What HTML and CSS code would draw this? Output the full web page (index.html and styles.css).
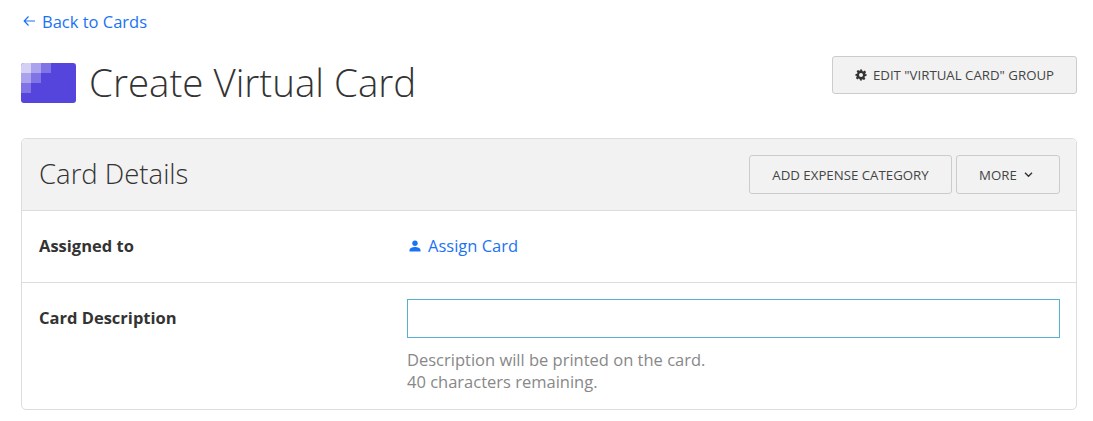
FILE: index.html
```html
<!DOCTYPE html>
<html lang="en">
<head>
  <meta charset="UTF-8" />
  <title>Create Virtual Card</title>
  <link rel="stylesheet" href="styles.css">
</head>
<body>

<div class="page">
  <a class="back-link" href="#">
    <svg class="back-arrow" width="12" height="12" viewBox="0 0 12 12"><path d="M5.500 1.500 1.200 6l4.300 4.500M1.400 6H12" fill="none" stroke="currentColor" stroke-width="1.200"/></svg>
    Back to Cards
  </a>

  <div class="page-header">
    <div class="title-group">
      <svg class="card-logo" width="55" height="40" viewBox="0 0 55 40">
        <rect width="55" height="40" rx="3" fill="#5545dd"/>
        <path d="M3 0h7v10H0V3a3 3 0 0 1 3-3z" fill="#d4cff5"/>
        <rect x="10" width="10" height="10" fill="#aaa2ec"/>
        <rect x="20" width="10" height="10" fill="#7f73e5"/>
        <rect y="10" width="10" height="10" fill="#aaa2ec"/>
        <rect x="10" y="10" width="10" height="10" fill="#7f73e5"/>
        <rect y="20" width="10" height="10" fill="#7f73e5"/>
      </svg>
      <h1>Create Virtual Card</h1>
    </div>
    <button class="btn btn-edit">
      <svg class="gear" width="12" height="12" viewBox="0 0 24 24"><path fill-rule="evenodd" d="M10 1h4l.7 3.200 1.900.8 2.800-1.800 2.800 2.800-1.800 2.800.8 1.900L23 10v4l-3.200.7-.8 1.900 1.800 2.800-2.800 2.800-2.800-1.800-1.900.8L14 23h-4l-.7-3.200-1.900-.8-2.800 1.800-2.800-2.800 1.800-2.800-.8-1.900L1 14v-4l3.200-.7.8-1.900-1.800-2.800 2.800-2.800 2.800 1.800 1.900-.8zM12 8a4 4 0 1 0 0 8 4 4 0 0 0 0-8z" fill="#333"/></svg>
      EDIT "VIRTUAL CARD" GROUP
    </button>
  </div>

  <div class="panel">
    <div class="panel-head">
      <h2>Card Details</h2>
      <div class="panel-actions">
        <button class="btn btn-category">ADD EXPENSE CATEGORY</button>
        <button class="btn btn-more">MORE
          <svg class="chevron" width="9" height="6" viewBox="0 0 9 6"><path d="M1 .8l3.500 3.500L8 .8" fill="none" stroke="#333" stroke-width="1.400"/></svg>
        </button>
      </div>
    </div>

    <div class="row row-assign">
      <div class="row-label">Assigned to</div>
      <div class="row-value">
        <a class="assign-link" href="#">
          <svg width="12" height="12" viewBox="0 0 12 12"><circle cx="6" cy="3.200" r="2.700" fill="currentColor"/><path d="M.5 11.500V10C.5 8 3.500 7 6 7s5.500 1 5.500 3v1.500z" fill="currentColor"/></svg>
          Assign Card
        </a>
      </div>
    </div>

    <div class="row row-desc">
      <div class="row-label">Card Description</div>
      <div class="row-value">
        <input class="desc-input" type="text" />
        <p class="hint">Description will be printed on the card.<br>40 characters remaining.</p>
      </div>
    </div>
  </div>
</div>

</body>
</html>
```

FILE: styles.css
```css
body {
  margin: 0;
  font-family: 'Open Sans', sans-serif;
  font-size: 16.5px;
  color: #333;
  background: white;
}

.page {
  padding: 10px 16px 11px 21px;
}

a {
  color: #1a73f5;
  text-decoration: none;
}

.back-link {
  display: flex;
  align-items: center;
  gap: 7px;
  height: 22px;
  padding-left: 2px;
}

.page-header {
  display: flex;
  justify-content: space-between;
  align-items: flex-start;
  margin-top: 24px;
  margin-bottom: 16px;
  height: 66px;
}

.title-group {
  display: flex;
  align-items: center;
  gap: 13px;
}

.card-logo {
  display: block;
  margin-top: 2px;
}

h1 {
  margin: 0;
  font-size: 38.5px;
  font-weight: 300;
  line-height: 52px;
  color: #333;
}

.btn {
  font-family: 'Open Sans', sans-serif;
  font-size: 13.25px;
  color: #444;
  background: #f2f2f2;
  border: 1px solid #ccc;
  border-radius: 3px;
  padding: 0;
}

.btn-edit {
  display: flex;
  align-items: center;
  justify-content: center;
  gap: 6px;
  width: 245px;
  height: 38px;
}

.panel {
  border: 1px solid #ddd;
  border-radius: 5px;
}

.panel-head {
  display: flex;
  justify-content: space-between;
  align-items: center;
  height: 71px;
  padding: 0 16px 0 17px;
  background: #f2f2f2;
  border-bottom: 1px solid #ddd;
  border-radius: 5px 5px 0 0;
}

h2 {
  margin: 0 0 2px;
  font-size: 27.5px;
  font-weight: 300;
  color: #333;
}

.panel-actions {
  display: flex;
  gap: 4px;
}

.btn-category {
  width: 203px;
  height: 39px;
}

.btn-more {
  display: flex;
  align-items: center;
  justify-content: center;
  gap: 7px;
  width: 104px;
  height: 39px;
  padding-right: 4px;
}

.row {
  display: flex;
  padding: 0 16px 0 17px;
}

.row-label {
  width: 368px;
  font-weight: 700;
}

.row-value {
  flex: 1;
}

.row-assign {
  align-items: center;
  height: 69px;
  padding-bottom: 2px;
  border-bottom: 1px solid #ddd;
}

.assign-link {
  display: flex;
  align-items: center;
  gap: 7px;
  padding-left: 2px;
}

.row-desc {
  padding-top: 16px;
  padding-bottom: 16px;
}

.row-desc .row-label {
  padding-top: 7px;
}

.desc-input {
  display: block;
  box-sizing: border-box;
  width: 100%;
  height: 39px;
  border: 1px solid #55b0d3;
  background: white;
  padding: 0 8px;
}

.hint {
  margin: 11px 0 0;
  font-size: 16.5px;
  line-height: 22px;
  color: #888;
}
```
